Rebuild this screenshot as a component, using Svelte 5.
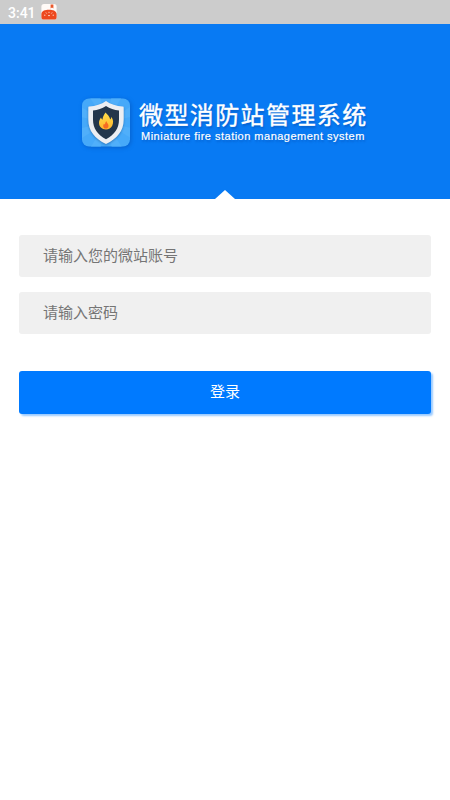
<script>
	let account = $state("");
	let password = $state("");

	const rays = [0, 45, 90, 135, 180, 225, 270, 315];

	function login(event) {
		event.preventDefault();
	}
</script>

<div class="screen">
	<div class="status-bar">
		<span class="time">3:41</span>
		<svg class="notice" viewBox="0 0 16 16">
			<rect x="0.4" y="0" width="15.2" height="15.6" rx="2.6" fill="#fffaf7" />
			<path d="M9.600 0.600h2.800v4l-1.400-1.100-1.400 1.100z" fill="#e9582c" />
			<path d="M.4 9.700C1 6.800 4 5.800 8 5.800s7 1 7.600 3.900V13a2.600 2.600 0 0 1-2.600 2.600H3A2.600 2.600 0 0 1 .4 13z" fill="#ed481e" />
			<path d="M3 11.200h1.400M4.900 8.500l.7 1M8 7.800v1.300M11.100 8.500l-.7 1M11.600 11.200H13M7 11.600h2" stroke="#ffd9cc" stroke-width=".9" fill="none" />
		</svg>
	</div>

	<header>
		<div class="brand">
			<svg class="logo" viewBox="0 0 50 50">
				<defs>
					<clipPath id="tile"><rect x="1" y="1" width="48" height="48" rx="7" /></clipPath>
					<linearGradient id="flame" x1="0" y1="0" x2="0" y2="1">
						<stop offset="0" stop-color="#ffdf4b" />
						<stop offset="1" stop-color="#ffb52c" />
					</linearGradient>
				</defs>
				<g clip-path="url(#tile)">
					<rect width="50" height="50" fill="#46a9f9" />
					{#each rays as angle}
						<path d="M25 25L18-15H32z" fill="#50affa" transform="rotate({angle + 22} 25 25)" />
					{/each}
				</g>
				<path class="shield" d="M25 3.500c-4.500 3.400-10.500 5.100-16.700 5.500-.7 0-1 .5-1 1.200V22c0 11.500 6.700 19.300 17.700 24.500C36 41.300 42.700 33.500 42.700 22V10.200c0-.7-.3-1.200-1-1.200C35.500 8.600 29.500 6.900 25 3.500z" fill="#eceef2" />
				<path d="M25 8.500c-3.900 2.700-8.300 3.900-13 4.400V22c0 9 4.500 15.200 13 19.700C33.500 37.200 38 31 38 22v-9.100C33.300 12.400 28.900 11.200 25 8.500z" fill="#23364b" />
				<path d="M24.500 15c1.700 2.100 4.300 3.900 4.700 7 .8-.6 1.100-1.600 1-2.700 2.400 3 2.300 6.200 1 8.900-1.100 2.400-3.500 3.800-6.200 3.800-4.200 0-7-2.900-7-6.700 0-2.100.9-3.800 2-5.300.2 1.100.7 1.800 1.500 2.300.1-2.800 1.400-5.100 3-7.300z" fill="url(#flame)" />
				<path d="M25.300 23.500c.1 1.600 2.200 2.600 2.200 4.700 0 1.700-1.100 2.900-2.600 2.900s-2.700-1.100-2.700-2.700c0-.9.400-1.500.8-2.100.3.500.5.700.9.800.1-1.400.6-2.500 1.400-3.600z" fill="#f66b22" />
			</svg>
			<div class="names">
				<h1>微型消防站管理系统</h1>
				<p>Miniature fire station management system</p>
			</div>
		</div>
	</header>

	<form onsubmit={login}>
		<input type="text" placeholder="请输入您的微站账号" bind:value={account} />
		<input type="password" placeholder="请输入密码" bind:value={password} />
		<button type="submit">登录</button>
	</form>
</div>

<style>
	:global(body) {
		background: #fff;
	}

	.screen {
		min-height: 800px;
		font-family: "Noto Sans CJK SC", sans-serif;
	}

	.status-bar {
		display: flex;
		align-items: center;
		gap: 5px;
		height: 24px;
		padding-left: 8px;
		background: #ccc;
	}

	.time {
		color: #fff;
		font: 500 14px/24px Roboto, sans-serif;
		padding-top: 2px;
	}

	.notice {
		width: 16px;
		height: 16px;
	}

	header {
		position: relative;
		box-sizing: border-box;
		height: 175px;
		padding: 73px 0 0 81px;
		background: #087af3;
	}

	header::after {
		content: "";
		position: absolute;
		bottom: 0;
		left: 215px;
		border: solid transparent;
		border-width: 0 10px 9px;
		border-bottom-color: #fff;
	}

	.brand {
		display: flex;
		gap: 8px;
		color: #fff;
	}

	.logo {
		width: 50px;
		height: 51px;
		filter: drop-shadow(1px 1px 2px rgba(0, 40, 120, 0.3));
	}

	.shield {
		filter: drop-shadow(0 1px 1px rgba(0, 50, 110, 0.4));
	}

	.names {
		text-shadow: 1px 2px 2px rgba(0, 40, 120, 0.3);
		white-space: nowrap;
	}

	h1 {
		margin: 3px 0 0;
		font-size: 24px;
		font-weight: 400;
		line-height: 28px;
		letter-spacing: 1.4px;
		-webkit-text-stroke: 0.4px #fff;
	}

	p {
		margin: 1px 0 0 2px;
		font: 11px/14px "Liberation Sans", sans-serif;
		letter-spacing: 0.49px;
		-webkit-text-stroke: 0.2px #fff;
	}

	form {
		display: flex;
		flex-direction: column;
		gap: 15px;
		padding: 36px 19px 0;
	}

	input {
		box-sizing: border-box;
		width: 100%;
		height: 42px;
		padding: 0 24px 4px;
		border: 0;
		border-radius: 3px;
		outline: none;
		background: #f0f0f0;
		color: #333;
		font: 15px "Noto Sans CJK SC", sans-serif;
	}

	input::placeholder {
		color: #757575;
	}

	button {
		height: 43px;
		margin-top: 22px;
		padding: 0 0 4px;
		border: 0;
		border-radius: 3px;
		background: #007aff;
		box-shadow: 2px 2px 2px rgba(0, 122, 255, 0.4);
		color: #fff;
		font: 15px "Noto Sans CJK SC", sans-serif;
	}
</style>
